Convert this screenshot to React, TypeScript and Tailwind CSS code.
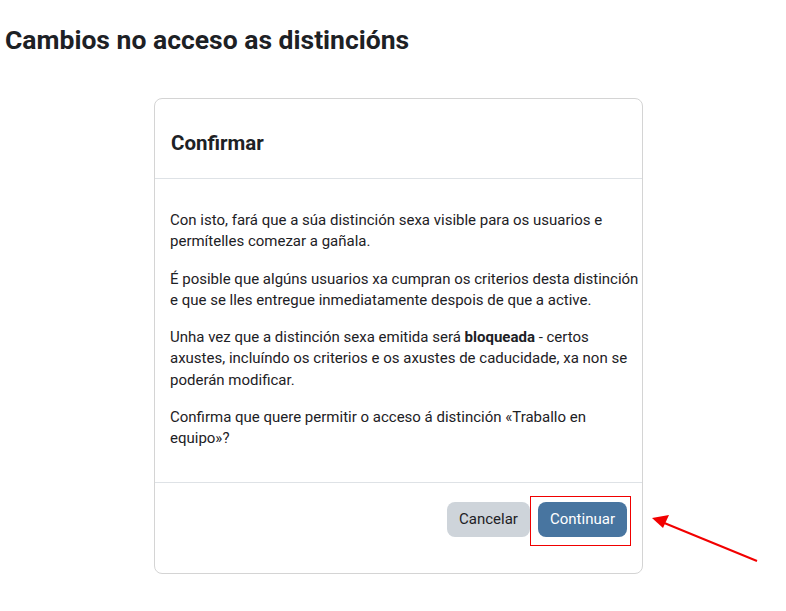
export default function App() {
  return (
    <div className="relative min-h-[611px] bg-white text-[#1d2125] font-['Roboto',sans-serif]">
      <h2 className="pl-[5px] pt-[24px] text-[26.5px] font-bold leading-[32px]">
        Cambios no acceso as distincións
      </h2>

      <div className="ml-[154px] mt-[42px] w-[489px] rounded-[8px] border border-[#d4d4d4] bg-white">
        <div className="h-[80px] border-b border-[#dee2e6] px-[16px] pt-[32px]">
          <h5 className="text-[20.5px] font-bold leading-[24px]">Confirmar</h5>
        </div>

        <div className="pl-[15px] pr-[14px] pt-[31px] pb-[32px] text-[15px] leading-[21.3px] text-[#1d2125]">
          <p className="mb-[16px]">
            Con isto, fará que a súa distinción sexa visible para os usuarios e permítelles comezar a gañala.
          </p>
          <p className="mb-[16px]">
            <span className="whitespace-nowrap">É posible que algúns usuarios xa cumpran os criterios desta distinción</span>
            <br />
            e que se lles entregue inmediatamente despois de que a active.
          </p>
          <p className="mb-[16px]">
            Unha vez que a distinción sexa emitida será <strong className="font-bold">bloqueada</strong> - certos axustes, incluíndo os criterios e os axustes de caducidade, xa non se poderán modificar.
          </p>
          <p>Confirma que quere permitir o acceso á distinción «Traballo en equipo»?</p>
        </div>

        <div className="flex h-[91px] items-start justify-end gap-[8px] border-t border-[#dee2e6] px-[15px] pt-[19px]">
          <button className="h-[35px] w-[83px] rounded-[8px] bg-[#ced4da] text-[15px] text-[#1d2125]">
            Cancelar
          </button>
          <div className="relative">
            <button className="h-[35px] w-[89px] rounded-[8px] bg-[#4875a0] text-[15px] text-white">
              Continuar
            </button>
            <div className="absolute -left-[8px] -top-[6px] h-[50px] w-[101px] border-[1.5px] border-[#f00000]" />
          </div>
        </div>
      </div>

      <svg className="absolute left-[645px] top-[510px]" width="120" height="60" viewBox="0 0 120 60">
        <line x1="112" y1="51" x2="12" y2="10" stroke="#f20000" strokeWidth="2" />
        <path d="M7 8 L24 5 L18 18 Z" fill="#f20000" />
      </svg>
    </div>
  )
}
